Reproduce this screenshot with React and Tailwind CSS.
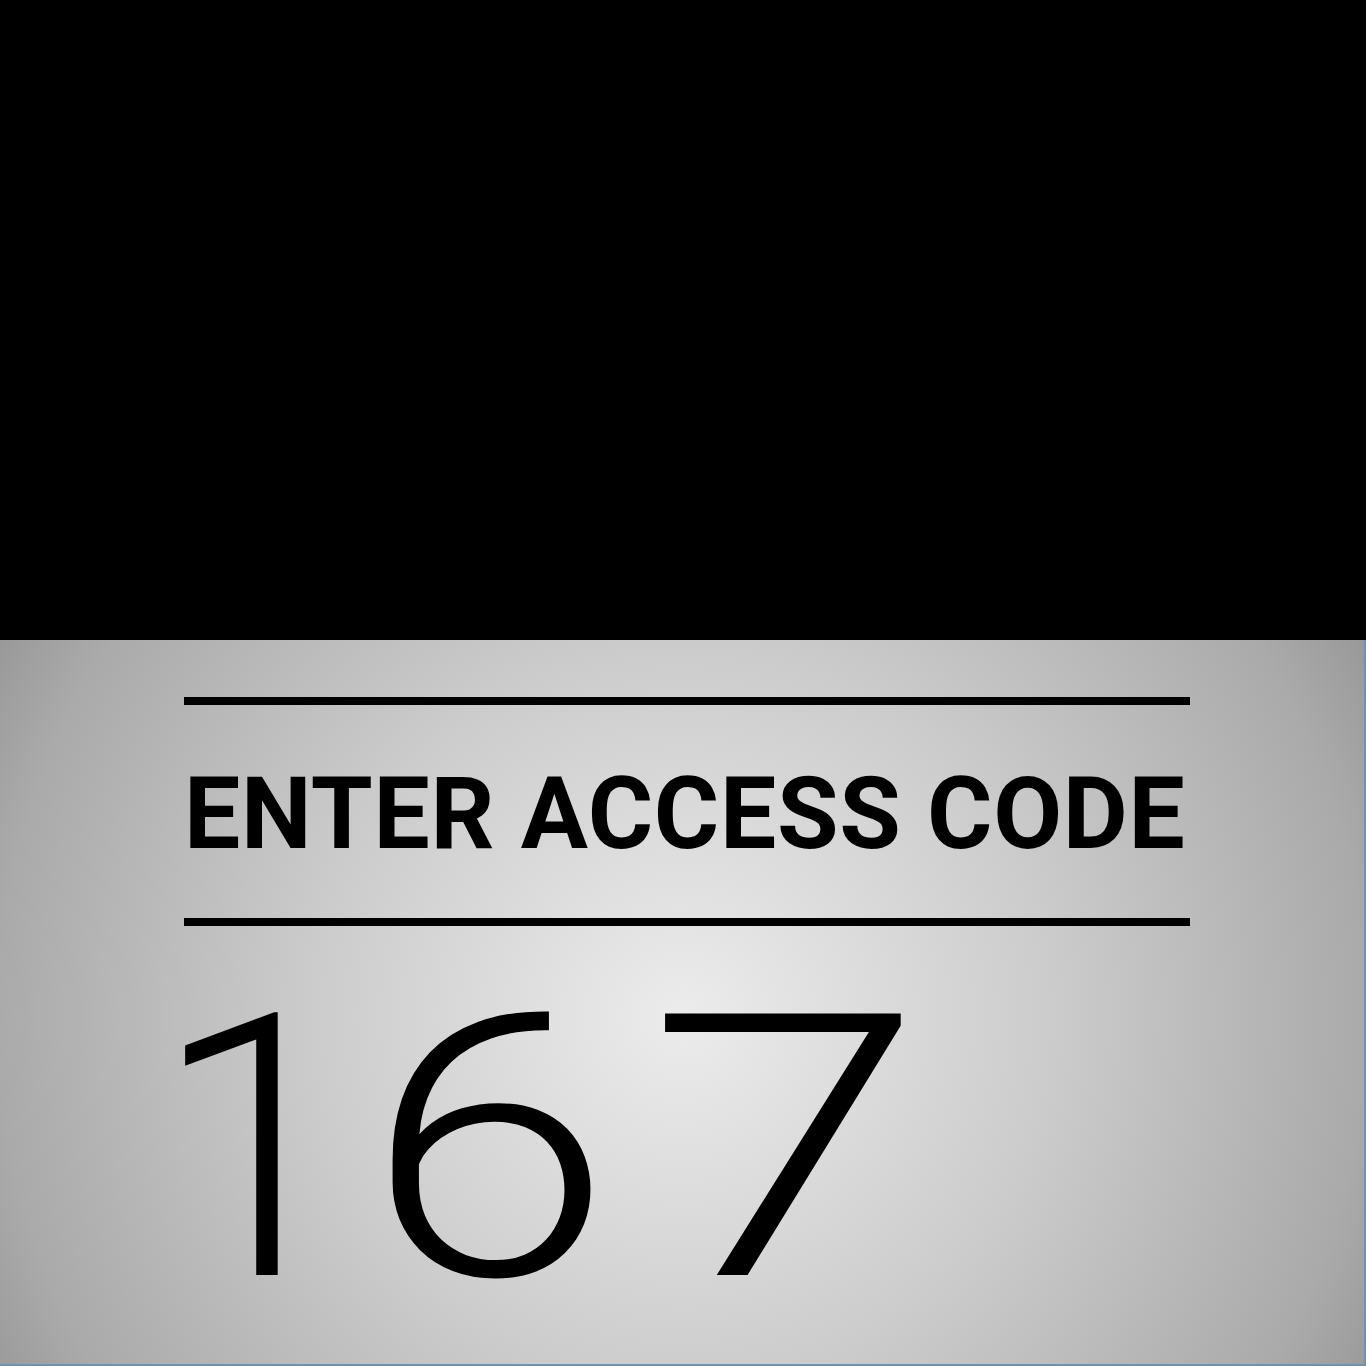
import React from "react";

const font = { fontFamily: "Roboto, 'Liberation Sans', sans-serif" };

export default function App() {
  return (
    <div className="w-[1366px] h-[1366px] flex flex-col bg-black">
      <div className="h-[640px] bg-black" />
      <div className="flex-1 flex flex-col pl-[184px] pt-[57px] border-r-2 border-b-2 border-[#6a93b8] bg-[radial-gradient(circle_farthest-corner_at_50%_52%,#ececec_0%,#cccccc_47%,#aaaaaa_88%,#999999_100%)]">
        <div className="w-[1006px] h-[8px] bg-black" />
        <h1
          className="mt-[59px] text-[100px] leading-[100px] font-bold text-black tracking-[0.7px] whitespace-nowrap"
          style={font}
        >
          ENTER ACCESS CODE
        </h1>
        <div className="mt-[54px] w-[1006px] h-[8px] bg-black" />
        {/* digits of the code typed so far */}
        <div className="mt-[64px] -ml-[31px] flex text-[368px] leading-[320px] font-light text-black" style={font}>
          <span className="inline-block w-[211px]">1</span>
          <span className="inline-block w-[282px] origin-left scale-x-[1.22]">6</span>
          <span className="inline-block origin-left scale-x-[1.37]">7</span>
        </div>
      </div>
    </div>
  );
}
